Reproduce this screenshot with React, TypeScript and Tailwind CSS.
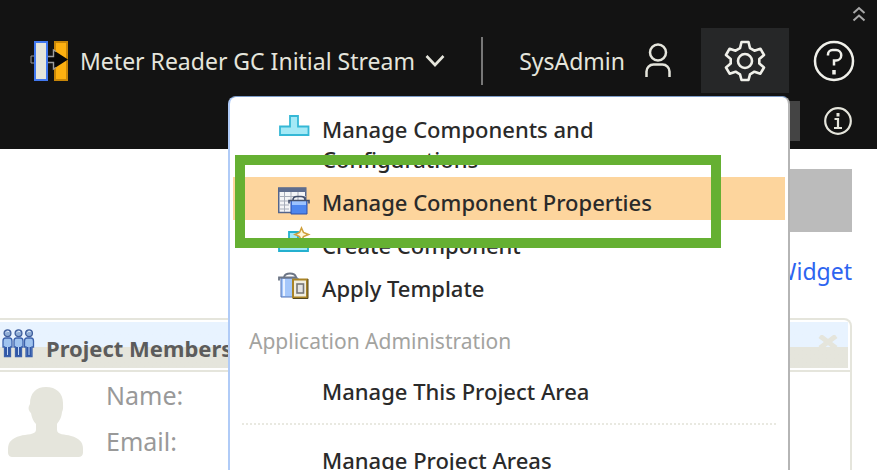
import type { ReactNode } from "react";

function StreamLogo() {
  return (
    <svg viewBox="0 -1 40 42" className="h-[42px] w-10" aria-hidden="true">
      <path d="M1 15h5v7H1z" fill="#111" stroke="#999" />
      <rect x="5" y="1" width="12" height="38" fill="#e5e5dc" stroke="#4178f0" strokeWidth="2" />
      <rect x="25" y="1" width="12" height="38" fill="#fdb010" stroke="#c88608" strokeWidth="2" />
      <path d="M18 15.500h6V9.500l14 9-14 9v-6h-6z" fill="#080808" />
      <path d="M26 10.500L23.500 9v6.500H18M18 21.500h5.500V28l2.500-1.500" fill="none" stroke="#9c9c9c" strokeWidth="1.400" />
    </svg>
  );
}

function ChevronIcon() {
  return (
    <svg viewBox="0 0 20 14" className="h-3.5 w-5" fill="none" stroke="#e5e5dc" strokeWidth="2.600" aria-hidden="true">
      <path d="M1.500 2l8.500 9 8.500-9" />
    </svg>
  );
}

function CollapseIcon() {
  return (
    <svg viewBox="0 0 14 16" className="h-4 w-3.5" fill="none" stroke="#a8a8a8" strokeWidth="2" aria-hidden="true">
      <path d="M1.500 7L7 2l5.500 5M1.500 14.500L7 9.500l5.500 5" />
    </svg>
  );
}

function UserIcon() {
  return (
    <svg viewBox="0 0 26 36" className="h-9 w-[26px]" fill="none" stroke="#e5e5dc" strokeWidth="2.500" aria-hidden="true">
      <circle cx="13" cy="9.500" r="8" />
      <path d="M1.500 34v-5.500a7 7 0 0 1 7-7h9a7 7 0 0 1 7 7V34" />
    </svg>
  );
}

function GearIcon() {
  return (
    <svg viewBox="0 0 42 42" className="size-[42px]" fill="none" stroke="#f0f0ea" strokeWidth="2.600" strokeLinejoin="round" aria-hidden="true">
      <path d="M17.500 2h7l1.500 6.200 4.400 2.500 6-2 3.600 6.300-4.700 4v4.500l4.700 4-3.600 6.200-6-2-4.400 2.600L24.500 40h-7L16 34.300l-4.400-2.600-6 2L2 27.500l4.700-4V19L2 15l3.600-6.300 6 2L16 8.200z" />
      <circle cx="21" cy="21" r="7" />
    </svg>
  );
}

function HelpIcon() {
  return (
    <svg viewBox="0 0 42 42" className="size-[42px]" fill="none" stroke="#f0f0ea" strokeWidth="2.500" aria-hidden="true">
      <circle cx="21" cy="21" r="19" />
      <path d="M15 15.500v-1a4.500 4.500 0 0 1 4.500-4.500h3.500a5 5 0 0 1 0 10.500h-2v5" />
      <path d="M21 30v4.500" strokeWidth="3.500" />
    </svg>
  );
}

function InfoIcon() {
  return (
    <svg viewBox="0 0 28 28" className="size-7" fill="none" stroke="#e5e5dc" strokeWidth="2.200" aria-hidden="true">
      <circle cx="14" cy="14" r="12.800" />
      <path d="M10.500 12H14v8.500M10 21h8" />
      <path d="M14 6v3.500" strokeWidth="3" />
    </svg>
  );
}

function ComponentIcon() {
  return (
    <svg viewBox="0 0 32 32" className="size-8" aria-hidden="true">
      <path d="M2 13.500h10V3h8v10.500h10.500V22H2z" fill="#a4e9f6" stroke="#35b8d6" strokeWidth="1.800" />
    </svg>
  );
}

function PropertiesIcon() {
  return (
    <svg viewBox="0 0 32 32" className="size-8" aria-hidden="true">
      <rect x="0.750" y="2" width="27" height="24.500" fill="#f4f5f7" stroke="#53658c" strokeWidth="1.500" />
      <path d="M1 2h27v4H1z" fill="#5e6d8e" />
      <path d="M1 10.500h27M1 15h27M1 19h10M1 23h10M6.500 6v20M13 6v9M20 6v9" stroke="#a7adb9" />
      <path d="M13 14.500h16V28H13z" fill="#4d86ee" stroke="#2c4fa8" />
      <path d="M14 15h14v4H14z" fill="#9cc3ff" />
      <path d="M11 17.500v-3h20v3M15 14q0-3.500 4-3.500h4q4 0 4 3.500" fill="none" stroke="#44506b" strokeWidth="1.600" />
    </svg>
  );
}

function CreateIcon() {
  return (
    <svg viewBox="0 0 32 32" className="size-8 overflow-visible" aria-hidden="true">
      <path d="M1 12.500h10V3h9v9.500h10V22H1z" fill="#a4e9f6" stroke="#24b0cf" strokeWidth="1.800" />
      <path d="M23.500-1l2 4.500 5 2-5 2-2 4.500-2-4.500-4.500-2 4.500-2z" fill="#fff6da" stroke="#d0a03c" strokeWidth="1.600" />
    </svg>
  );
}

function TemplateIcon() {
  return (
    <svg viewBox="0 0 32 32" className="size-8" aria-hidden="true">
      <path d="M3 6h17v19H3z" fill="#a4c7fb" stroke="#5374b8" />
      <path d="M5 7h2v17H5z" fill="#e8f1ff" />
      <path d="M1 8.500v-3h18M6 5q1-3.500 6-3.500T18 5" fill="none" stroke="#6c7585" strokeWidth="1.800" />
      <rect x="15" y="7.500" width="14" height="18" fill="#f1eee1" stroke="#a98427" strokeWidth="2" />
      <rect x="19" y="12" width="6.500" height="9" fill="#e4e4e4" stroke="#777" strokeWidth="1.600" />
      <path d="M15 26.500h15V7" fill="none" stroke="#53471f" />
    </svg>
  );
}

function Person({ x }: { x: number }) {
  return (
    <g transform={`translate(${x} 0)`}>
      <path d="M0.500 12q0-3 2.500-3h4q2.500 0 2.500 3v6H8v9.500H2V18H.500z" fill="#9fc3ef" stroke="#3c62ac" strokeWidth="1.300" />
      <path d="M2.500 18h5v9h-5z" fill="#3157a6" />
      <path d="M5 18v8" stroke="#c0d7f6" />
      <circle cx="5" cy="4.200" r="3.400" fill="#8fadd6" stroke="#3f5e9c" strokeWidth="1.300" />
      <path d="M3.500 3.500q1-2 3-1" stroke="#e8f2ff" fill="none" />
    </g>
  );
}

function MembersIcon() {
  return (
    <svg viewBox="0 0 34 30" className="h-[30px] w-[34px]" aria-hidden="true">
      <Person x={0.5} />
      <Person x={11.5} />
      <Person x={22} />
    </svg>
  );
}

function Avatar() {
  return (
    <svg viewBox="0 0 76 72" className="h-[72px] w-[76px]" fill="#e5e5dc" role="img" aria-label="Member">
      <path d="M38 1c10 0 17 6 17 16 0 4 .5 6-1 9-.5 6-3 9-5 12v6c0 5 8 4 14 6 8 2 12 6 12 13v3c0 4-2 5-5 5H5c-3 0-5-1-5-5v-3c0-7 4-11 12-13 6-2 16-1 16-6v-6c-3-3-4-6-5-11-3-3-3-6-1-9C22 7 28 1 38 1z" />
    </svg>
  );
}

function MenuItem({ icon, label, active }: { icon?: ReactNode; label: string; active?: boolean }) {
  return (
    <li className={active ? "mx-[3px] bg-[#fdd59d]" : "mx-[3px]"}>
      <button type="button" className="flex w-full pt-2.5 pr-14 pb-[3px] pl-[45px] text-left text-[22px] leading-[30px] font-medium text-[#2a2a2a]">
        <span className="-my-px mr-3 size-8 shrink-0">{icon}</span>
        <span>{label}</span>
      </button>
    </li>
  );
}

export default function App() {
  return (
    <div className="relative h-screen overflow-hidden bg-white font-['Noto_Sans',sans-serif] text-[23px] leading-[30px]">
      <header className="mr-px bg-[#131313] text-[#e5e5dc]">
        <div className="flex h-7 items-end justify-end pr-[11px] pb-1.5">
          <button type="button" aria-label="Collapse header"><CollapseIcon /></button>
        </div>
        <div className="flex h-[65px] items-center pl-[30px]">
          <StreamLogo />
          <button type="button" className="ml-2.5 flex items-center gap-2.5">
            Meter Reader GC Initial Stream
            <ChevronIcon />
          </button>
          <div className="ml-auto flex items-center">
            <div className="mr-9 h-12 w-0.5 bg-[#777]" />
            <button type="button" className="flex items-center gap-5">
              SysAdmin
              <UserIcon />
            </button>
            <button type="button" aria-label="Administration" className="ml-[30px] flex h-[65px] w-[88px] items-center justify-center bg-[#262728]">
              <GearIcon />
            </button>
            <button type="button" aria-label="Help" className="mr-[22px] ml-6"><HelpIcon /></button>
          </div>
        </div>
        <div className="flex h-14 items-center justify-end gap-6 pr-[25px]">
          <input aria-label="Search" className="h-10 w-48 bg-[#444]" />
          <button type="button" aria-label="Information"><InfoIcon /></button>
        </div>
      </header>

      <main className="pr-[26px]">
        <div className="flex flex-col items-end pt-5">
          <div className="h-[63px] w-60 bg-[#bbb]" />
          <a href="#widget" className="mt-6 text-[#2d64f0]">Add Widget</a>
        </div>
        <section className="mt-8 h-60 rounded-tr-lg border-2 border-l-0 border-[#e5e5dc]">
          <div className="border-b-2 border-[#e5e5dc] py-0.5 pr-0.5">
            <div className="flex h-[46px] items-center bg-linear-to-b from-[#e8f3ff] from-55% to-[#e5e5dc] to-55%">
              <span className="mb-0.5 ml-0.5"><MembersIcon /></span>
              <h2 className="ml-2.5 pt-1.5 text-[22px] font-bold text-[#5c5c5c]">Project Members</h2>
              <button type="button" aria-label="Close widget" className="mr-2.5 mb-1.5 ml-auto">
                <svg viewBox="0 0 20 14" className="h-3.5 w-5" stroke="#e5e5dc" strokeWidth="5" aria-hidden="true">
                  <path d="M2 1l16 12M18 1L2 13" />
                </svg>
              </button>
            </div>
          </div>
          <div className="flex gap-[22px] pt-2.5 pl-2">
            <div className="pt-1"><Avatar /></div>
            <dl className="-mt-2.5 text-[25px] leading-[46px] text-[#999]">
              <dt>Name:</dt>
              <dt>Email:</dt>
            </dl>
          </div>
        </section>
      </main>

      <div className="absolute top-24 right-[88px] w-[562px] rounded-t-lg border-x-2 border-t border-t-[#7d9cc8] border-r-[#b5b5b5] border-l-[#b0cbf7] bg-white pt-[7px] pb-4">
        <ul>
          <MenuItem icon={<ComponentIcon />} label="Manage Components and Configurations" />
          <MenuItem icon={<PropertiesIcon />} label="Manage Component Properties" active />
          <MenuItem icon={<CreateIcon />} label="Create Component" />
          <MenuItem icon={<TemplateIcon />} label="Apply Template" />
        </ul>
        <h3 className="h-[60px] pt-5 pl-[19px] text-[21px] leading-[30px] text-[#a3a39f]">Application Administration</h3>
        <ul>
          <MenuItem label="Manage This Project Area" />
        </ul>
        <hr className="mx-3 mt-3.5 mb-2.5 border-t-2 border-dotted border-[#e9e9e1]" />
        <ul>
          <MenuItem label="Manage Project Areas" />
        </ul>
        <div className="pointer-events-none absolute top-[58px] left-[5px] h-[93px] w-[486px] border-10 border-[#65b032]" />
      </div>
    </div>
  );
}
